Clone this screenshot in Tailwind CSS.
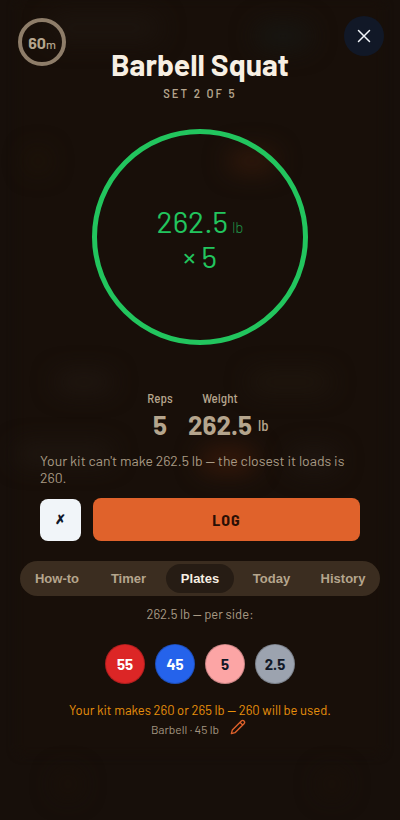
<!DOCTYPE html>
<html lang="en">
<head>
<meta charset="utf-8">
<meta name="viewport" content="width=device-width, initial-scale=1">
<title>Barbell Squat</title>
<script src="https://cdn.jsdelivr.net/npm/@tailwindcss/browser@4"></script>
</head>
<body class="bg-[#170f0a] font-[Barlow,Roboto,sans-serif] text-[#b5a58d]">
<div class="relative isolate min-h-screen overflow-hidden">
  <!-- Blurred workout list showing faintly through the overlay -->
  <div aria-hidden="true" class="pointer-events-none absolute inset-0 -z-10">
    <div class="absolute inset-x-4 top-0 h-[755px] rounded-lg bg-[#180f09] blur-xs"></div>
    <div class="absolute left-12 top-4 h-6 w-28 rounded-full bg-[#1d150f] blur-md"></div>
    <div class="absolute left-[255px] top-6 h-6 w-14 rounded-full bg-[#171713] blur-md"></div>
    <div class="absolute left-[228px] top-[151px] h-5 w-12 rounded-full bg-[#351a0b] blur-md"></div>
    <div class="absolute left-7 top-[151px] h-5 w-5 rounded-full bg-[#221608] blur-md"></div>
    <div class="absolute left-14 top-[374px] h-4 w-14 rounded-full bg-[#221913] blur-md"></div>
    <div class="absolute left-[250px] top-[374px] h-4 w-20 rounded-full bg-[#21180f] blur-md"></div>
    <div class="absolute left-4 top-[446px] h-4 w-24 rounded-full bg-[#211913] blur-md"></div>
    <div class="absolute left-[200px] top-[448px] h-6 w-14 rounded-full bg-[#38190a] blur-md"></div>
    <div class="absolute left-[290px] top-[450px] h-5 w-12 rounded-full bg-[#201813] blur-md"></div>
    <div class="absolute left-14 top-[772px] h-6 w-6 rounded-full bg-[#1c1108] blur-md"></div>
    <div class="absolute left-[320px] top-[772px] h-6 w-6 rounded-full bg-[#1c1108] blur-md"></div>
  </div>

  <div class="absolute left-[18px] top-[18px] flex size-12 items-center justify-center rounded-full border-4 border-[#8e7d69]">
    <span class="pt-px text-base font-bold">60<span class="text-xs font-medium">m</span></span>
  </div>
  <button type="button" aria-label="Close" class="absolute right-4 top-4 flex size-10 items-center justify-center rounded-full bg-[#111827] text-[#f1f5f9]">
    <svg class="size-5" viewBox="0 0 20 20" fill="none" stroke="currentColor" stroke-width="1.5" stroke-linecap="round" aria-hidden="true"><path d="M4.5 4.5l11 11M15.5 4.5l-11 11"/></svg>
  </button>

  <main class="flex flex-col px-5 pt-[46px]">
    <header class="text-center">
      <h1 class="text-[30px] leading-9 font-bold text-[#f7efe3]">Barbell Squat</h1>
      <p class="font-['Barlow_Semi_Condensed',Barlow,Roboto,sans-serif] text-[13px] leading-[22px] font-medium tracking-[2px]">SET 2 OF 5</p>
    </header>

    <section class="mx-auto mt-[25px] flex size-[216px] flex-col items-center justify-center rounded-full border-5 border-[#22c55e] pt-1 text-[30px] leading-[35px] text-[#22c55e]">
      <p>262.5<span class="ml-1 text-[15px] leading-none font-light text-[#22c55e]/70">lb</span></p>
      <p>× 5</p>
    </section>

    <form class="mt-[45px] px-5">
      <div class="flex justify-center gap-3 font-['Barlow_Semi_Condensed',Barlow,Roboto,sans-serif] text-[13px] font-medium">
        <div class="flex w-7 flex-col items-center">
          <label for="reps" class="leading-4">Reps</label>
          <input id="reps" type="text" inputmode="numeric" value="5" class="mt-1 w-full bg-transparent text-center font-[Barlow,Roboto,sans-serif] text-[26px] leading-[30px] font-bold outline-none">
        </div>
        <div class="grid grid-cols-[68px_auto]">
          <label for="weight" class="text-center leading-4">Weight</label>
          <input id="weight" type="text" inputmode="decimal" value="262.5" class="col-start-1 mt-1 w-full bg-transparent text-center font-[Barlow,Roboto,sans-serif] text-[26px] leading-[30px] font-bold outline-none">
          <span class="col-start-2 mt-1 -mr-1 ml-1 w-0 self-center text-[15px]">lb</span>
        </div>
      </div>
      <p class="mt-3 text-sm leading-[17px] text-[#a89a84]">Your kit can't make 262.5 lb — the closest it loads is 260.</p>
      <div class="mt-3 flex items-end gap-3">
        <button type="button" aria-label="Skip set" class="h-[42px] w-[41px] rounded-lg bg-[#f1f5f9] text-[13px] font-bold text-[#0f172a]">✗</button>
        <button type="button" class="h-[43px] flex-1 rounded-lg bg-[#e0622b] font-['Barlow_Semi_Condensed',Barlow,Roboto,sans-serif] text-base font-bold tracking-[1px] text-[#2a0f05]">LOG</button>
      </div>
    </form>

    <nav class="mt-5 flex justify-between rounded-full bg-[#3b2d20] p-[3px] font-[Arial,'Liberation_Sans',sans-serif] text-[13px] leading-[29px] font-bold text-[#b5a58d]">
      <button type="button" class="w-[68px]">How-to</button>
      <button type="button" class="w-[68px]">Timer</button>
      <button type="button" aria-pressed="true" class="w-[68px] rounded-full bg-[#261c14] text-[#f7efe3]">Plates</button>
      <button type="button" class="w-[68px]">Today</button>
      <button type="button" class="w-[68px]">History</button>
    </nav>

    <section class="flex flex-col items-center text-center">
      <p class="mt-2 text-[13px] leading-5 text-[#a89a84]">262.5 lb — per side:</p>
      <ul class="mt-5 flex gap-[10px] text-[15px] font-bold">
        <li class="flex size-10 items-center justify-center rounded-full border border-black/20 bg-[#dc2626] text-white">55</li>
        <li class="flex size-10 items-center justify-center rounded-full border border-black/20 bg-[#2563eb] text-white">45</li>
        <li class="flex size-10 items-center justify-center rounded-full border border-black/20 bg-[#fca5a5] text-[#111827]">5</li>
        <li class="flex size-10 items-center justify-center rounded-full border border-black/20 bg-[#9ca3af] text-[#111827]">2.5</li>
      </ul>
      <p class="mt-4 text-[13px] leading-5 text-[#e8900b]">Your kit makes 260 or 265 lb — 260 will be used.</p>
      <div class="-mt-px flex items-center gap-2 text-xs leading-5 text-[#a39580]">
        <span>Barbell · 45 lb</span>
        <button type="button" aria-label="Edit barbell" class="flex w-[22px] justify-center text-[#e0622b]">
          <svg class="-mt-1 size-4" viewBox="0 0 24 24" fill="none" stroke="currentColor" stroke-width="2" stroke-linecap="round" stroke-linejoin="round" aria-hidden="true"><path d="M2 22l1.500-5.500L17 3a2.800 2.800 0 0 1 4 4L7.500 20.500zM15 5l4 4"/></svg>
        </button>
      </div>
    </section>
  </main>
</div>
</body>
</html>
